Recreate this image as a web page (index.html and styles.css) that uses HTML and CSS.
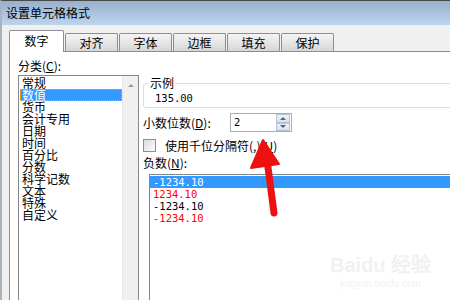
FILE: index.html
```html
<!DOCTYPE html>
<html lang="zh-CN">
<head>
  <meta charset="UTF-8">
  <title>设置单元格格式</title>
  <link rel="stylesheet" href="styles.css">
</head>
<body>
  <div class="window">
    <div class="titlebar">设置单元格格式</div>
    <div class="dialog">
      <div class="tabs">
        <div class="tab active">数字</div>
        <div class="tab">对齐</div>
        <div class="tab">字体</div>
        <div class="tab">边框</div>
        <div class="tab">填充</div>
        <div class="tab">保护</div>
      </div>

      <div class="panel">
        <div class="col-left">
          <div class="label">分类(<u>C</u>):</div>
          <div class="listbox category">
            <ul class="items">
              <li>常规</li>
              <li class="selected">数值</li>
              <li>货币</li>
              <li>会计专用</li>
              <li>日期</li>
              <li>时间</li>
              <li>百分比</li>
              <li>分数</li>
              <li>科学记数</li>
              <li>文本</li>
              <li>特殊</li>
              <li>自定义</li>
            </ul>
            <div class="scrollbar">
              <span class="sb-arrow up"></span>
              <span class="sb-arrow down"></span>
            </div>
          </div>
        </div>

        <div class="col-right">
          <fieldset class="sample">
            <legend>示例</legend>
            <div class="sample-value num">135.00</div>
          </fieldset>

          <div class="spin-row">
            <span class="spin-label">小数位数(<u>D</u>):</span>
            <div class="spin">
              <span class="spin-value num">2</span>
              <span class="spin-btns">
                <span class="spin-btn"><i class="tri up"></i></span>
                <span class="spin-btn"><i class="tri down"></i></span>
              </span>
            </div>
          </div>

          <div class="check-row">
            <span class="checkbox"></span>
            <span>使用千位分隔符(,)(<u>U</u>)</span>
          </div>

          <div class="label neg-label">负数(<u>N</u>):</div>
          <div class="listbox negatives">
            <ul class="items num">
              <li class="selected">-1234.10</li>
              <li class="red">1234.10</li>
              <li>-1234.10</li>
              <li class="red">-1234.10</li>
            </ul>
          </div>
        </div>
      </div>
    </div>

    <svg class="pointer" width="450" height="300" viewBox="0 0 450 300">
      <line x1="267" y1="160" x2="274" y2="213" stroke="#ee1111" stroke-width="7" stroke-linecap="round"/>
      <polygon points="263,140 251,168 279,164" fill="#ee1111" stroke="#ee1111" stroke-width="2" stroke-linejoin="round"/>
    </svg>

    <div class="watermark">
      <div class="wm-logo">Bai<span class="wm-paw">du</span> 经验</div>
      <div class="wm-url">jingyan.baidu.com</div>
    </div>
  </div>
</body>
</html>
```

FILE: styles.css
```css
body {
  margin: 0;
  width: 450px;
  height: 300px;
  overflow: hidden;
  background: #f0f0f0;
  font-family: "Noto Sans CJK SC", "Liberation Sans", sans-serif;
  font-size: 12px;
  color: #000;
}

u {
  text-decoration: underline;
}

.num {
  font-family: "DejaVu Sans Mono", "Liberation Mono", monospace;
  font-size: 10.5px;
}

.window {
  position: relative;
  height: 300px;
  border-top: 1px solid #4a4a4a;
  border-left: 2px solid #aab4be;
  box-sizing: border-box;
  overflow: hidden;
}

.titlebar {
  height: 24px;
  line-height: 24px;
  padding-left: 4px;
  background: linear-gradient(#98b0cc, #bcd4ee);
  color: #000;
}

.dialog {
  padding: 6px 0 0 7px;
}

.tabs {
  display: flex;
  align-items: flex-end;
  height: 20px;
  position: relative;
  z-index: 1;
}

.tab {
  width: 51px;
  height: 17px;
  line-height: 17px;
  margin-left: 1px;
  text-align: center;
  border: 1px solid #8c8e94;
  border-bottom: none;
  border-radius: 2px 2px 0 0;
  background: linear-gradient(#f4f4f4, #e6e6e6 50%, #d6d6d6);
}

.tab.active {
  width: 53px;
  height: 21px;
  line-height: 19px;
  margin-left: 0;
  margin-bottom: -1px;
  background: #fff;
}

.panel {
  display: flex;
  height: 260px;
  background: #fff;
  border-top: 1px solid #8c8e94;
  border-left: 1px solid #8c8e94;
  padding: 7px 0 0 8px;
}

.label {
  line-height: 14px;
  height: 14px;
}

.col-left {
  width: 121px;
  flex: none;
}

.listbox {
  border: 1px solid #828790;
  background: #fff;
  box-sizing: border-box;
}

.items {
  list-style: none;
  margin: 0;
  padding: 1px 0 0 1px;
}

.items li {
  height: 12px;
  line-height: 12px;
  padding-left: 2px;
  white-space: nowrap;
}

.items li.selected {
  background: #3399ff;
  color: #fff;
}

.category {
  display: flex;
  height: 240px;
  margin-top: 2px;
}

.category .items {
  flex: 1;
}

.category .items li.selected {
  outline: 1px dotted #f2a33a;
  outline-offset: -1px;
}

.scrollbar {
  width: 16px;
  flex: none;
  background: #f0f0f0;
  border-left: 1px solid #e8e8e8;
  display: flex;
  flex-direction: column;
  justify-content: space-between;
  align-items: center;
  padding: 8px 0 3px;
  box-sizing: border-box;
}

.sb-arrow {
  width: 0;
  height: 0;
  border-left: 3px solid transparent;
  border-right: 3px solid transparent;
}

.sb-arrow.up {
  border-bottom: 3px solid #9a9a9a;
}

.sb-arrow.down {
  border-top: 3px solid #9a9a9a;
}

.col-right {
  width: 320px;
  flex: none;
  margin-left: 4px;
}

.sample {
  margin: 17px 0 0 0;
  padding: 2px 0 3px 4px;
  border: 1px solid #d5dfe5;
  border-radius: 3px;
}

.sample legend {
  padding: 0 2px;
  line-height: 14px;
}

.sample-value {
  line-height: 12px;
  padding-left: 7px;
}

.spin-row {
  display: flex;
  align-items: center;
  margin-top: 5px;
}

.spin-label {
  width: 87px;
}

.spin {
  display: flex;
  width: 62px;
  height: 19px;
  border: 1px solid #abadb3;
  box-sizing: border-box;
}

.spin-value {
  flex: 1;
  line-height: 17px;
  padding-left: 3px;
}

.spin-btns {
  display: flex;
  flex-direction: column;
  width: 14px;
  margin-right: 1px;
}

.spin-btn {
  flex: 1;
  display: flex;
  align-items: center;
  justify-content: center;
  border: 1px solid #b5c3d3;
  background: linear-gradient(#eef4fb, #d5e2f0);
}

.tri {
  width: 0;
  height: 0;
  border-left: 3px solid transparent;
  border-right: 3px solid transparent;
}

.tri.up {
  border-bottom: 3px solid #4d6185;
}

.tri.down {
  border-top: 3px solid #4d6185;
}

.check-row {
  display: flex;
  align-items: center;
  margin-top: 6px;
  height: 14px;
}

.checkbox {
  width: 13px;
  height: 13px;
  box-sizing: border-box;
  border: 1px solid #8f8f8f;
  background: linear-gradient(135deg, #dcdcdc, #fbfbfb);
  margin-right: 9px;
}

.neg-label {
  margin-top: 4px;
}

.negatives {
  margin: 4px 0 0 6px;
  height: 140px;
}

.negatives .items {
  padding: 1px 0 0 0;
}

.negatives .items li {
  padding-left: 3px;
}

.negatives .items li.red {
  color: #ff0000;
}

.pointer {
  position: absolute;
  left: -2px;
  top: -1px;
}

.watermark {
  position: absolute;
  left: 328px;
  top: 252px;
  color: #f1f1f1;
  font-family: "Liberation Sans", sans-serif;
  text-align: center;
}

.wm-logo {
  font-size: 20px;
  font-weight: bold;
  line-height: 24px;
}

.wm-url {
  font-size: 10px;
  line-height: 14px;
}
```
